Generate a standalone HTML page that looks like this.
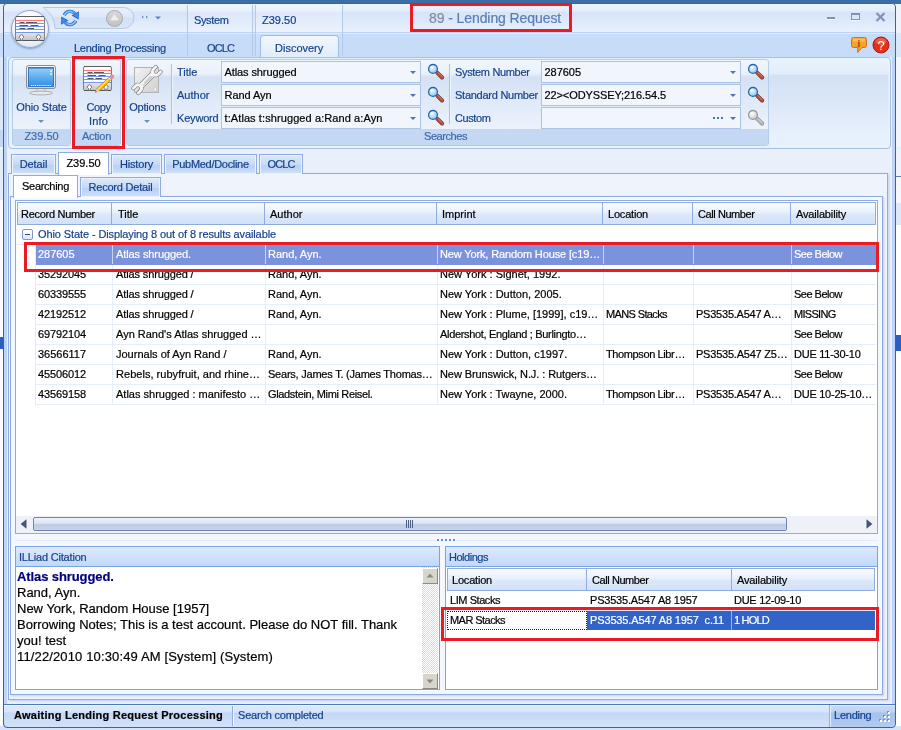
<!DOCTYPE html>
<html>
<head>
<meta charset="utf-8">
<title>89 - Lending Request</title>
<style>
*{box-sizing:border-box;margin:0;padding:0}
html,body{width:901px;height:730px;overflow:hidden;background:#fff}
body{-webkit-text-stroke:.2px;will-change:transform;position:relative;font-family:"Liberation Sans",sans-serif;font-size:11px;color:#000;line-height:13px}
.a{position:absolute}
.t{position:absolute;white-space:nowrap;line-height:13px;height:13px}
.b{color:#15428b}
.c{text-align:center}
/* window */
#topstrip{left:0;top:0;width:901px;height:4px;background:#3b6ea5}
#leftbg{left:0;top:4px;width:4px;height:726px;background:linear-gradient(#e4ecf9 0,#e4ecf9 29px,#c7dcf9 29px,#c7dcf9 53px,#dce7f7 53px,#dce7f7 126px,#c3d7f2 126px,#c3d7f2 143px,#e8fbff 143px,#e8fbff 145px,#e3ecfa 145px,#e3ecfa 196px,#fafcfe 196px,#fafcfe 333px,#2a5fc4 333px,#2a5fc4 345px,#fafcfe 345px)}
#rightbg{left:895px;top:4px;width:6px;height:726px;background:linear-gradient(#eef3fb 0,#eef3fb 29px,#d9e7fa 29px,#d9e7fa 53px,#f1f5fc 53px,#f1f5fc 143px,#d8f4ff 143px,#d8f4ff 145px,#eef3fb 145px,#eef3fb 172px,#5f7fb5 172px,#5f7fb5 173px,#f4f7fd 173px,#f4f7fd 199px,#dde8f8 199px,#dde8f8 221px,#fdfeff 221px,#fdfeff 331px,#2a5fc4 331px,#2a5fc4 347px,#fdfeff 347px)}
#botbg{left:0;top:726px;width:901px;height:4px;background:#d6e3f7}
#win{left:3px;top:3px;width:893px;height:725px;border:1px solid #3d62a0;border-radius:4px;background:#e9f0fb;overflow:hidden;box-shadow:inset 3px 0 0 #bdd3f7,inset -3px 0 0 #bdd3f7}
#titlebar{left:4px;top:4px;width:891px;border-radius:4px 4px 0 0;height:29px;background:linear-gradient(#ecf3fd 0,#e4edfb 7px,#d7e4f8 8px,#dae6f9 14px,#e9f1fd 28px,#b9d2f5 28px)}
#tabrow{left:4px;top:33px;width:891px;height:24px;background:#c7dcf9;border-top:1px solid #dcebfd}
/* ribbon */
#ribbon{left:8px;top:57px;width:883px;height:92px;border:1px solid #a9c0e4;border-radius:4px;box-shadow:inset 0 0 0 1px #e0f5ff,inset 0 0 0 2px rgba(226,246,255,.6);background:linear-gradient(#ebf2fc 0,#e3ecfa 16px,#d3e1f5 17px,#dce7f8 45px,#e8f0fc 78px,#e9f1fc 91px)}
.grp{position:absolute;top:1px;height:87px;border:1px solid #b4cde9;border-radius:3px;background:linear-gradient(rgba(255,255,255,.35) 0,rgba(255,255,255,.25) 16px,rgba(255,255,255,0) 17px,rgba(255,255,255,.25) 71px)}
.grp .cap{position:absolute;left:0;right:0;bottom:0;height:16px;background:#c5d8f3;color:#3e6aaa;text-align:center;line-height:15px;border-radius:0 0 2px 2px}
.combo{position:absolute;height:22px;width:200px;border:1px solid #abc4e6;background:#f1f6fc}
.combo span{position:absolute;left:2.5px;top:4px;line-height:13px;white-space:nowrap}
.combo i{position:absolute;right:4px;top:9px;width:0;height:0;border:3px solid transparent;border-top:3px solid #4a74b4;border-bottom:0}
.vsep{position:absolute;width:1px;background:#a9c2e2;box-shadow:1px 0 0 #eef4fc}
/* tabs */
.tab{position:absolute;height:20px;border:1px solid #8eace0;border-bottom:0;background:linear-gradient(#dfeafa 0,#c6d9f5 50%,#b7cff3 51%,#cfe0f8 100%);box-shadow:inset 0 0 0 1px #eaf2fd;color:#15428b;text-align:center;line-height:18px}
.tab.on{background:#fff;color:#000;box-shadow:none}
.page{position:absolute;border:1px solid #8eace0}
/* grid */
.hdr{position:absolute;height:23px;border-top:1px solid #8eace0;border-right:1px solid #8eace0;border-bottom:1px solid #8eace0;background:linear-gradient(#f8fbff 0,#e9f0fb 45%,#dbe7f9 55%,#d3e2f8 100%);line-height:22px;padding-left:5px;white-space:nowrap;overflow:hidden}
.row{position:absolute;left:36px;width:840px;height:20px;border-bottom:1px solid #e6eefa}
.row span{position:absolute;top:0;height:19px;line-height:18px;padding-left:2px;white-space:nowrap;overflow:hidden;border-left:1px solid #e6eefa}
.row.sel{background:#7b93dc;color:#fff;border-bottom-color:#7b93dc}
.row.sel span{border-left-color:#c9d4f3}
.red{position:absolute;border:3px solid #ea1b24}
.gb{position:absolute;border:1px solid #79a3e1;background:#fff}
.gb .gh{position:absolute;left:0;top:0;right:0;height:20px;border-bottom:1px solid #79a3e1;background:linear-gradient(#deeafd 0,#cfe1fb 50%,#c2d8f9 100%);color:#15428b;line-height:20px;padding-left:3px}
</style>
</head>
<body>
<div class="a" id="topstrip"></div>
<div class="a" id="leftbg"></div>
<div class="a" id="rightbg"></div>
<div class="a" id="botbg"></div>

<div class="a" id="win"></div>
<div class="a" id="titlebar"></div>
<div class="a" id="tabrow"></div>
<!-- quick access toolbar pill -->
<svg class="a" style="left:38px;top:5px" width="100" height="26" viewBox="38 5 100 26">
 <defs><linearGradient id="qat" x1="0" y1="0" x2="0" y2="1"><stop offset="0" stop-color="#e9f0fb"/><stop offset=".45" stop-color="#dde8f8"/><stop offset=".5" stop-color="#d2e0f5"/><stop offset="1" stop-color="#dae6f8"/></linearGradient></defs>
 <path d="M43 8.500H123.500A10.500 10.500 0 0 1 123.500 29.500H56A25 25 0 0 0 43 8.500Z" fill="#f3f8ff"/>
 <path d="M43 7.500H123.500A10.500 10.500 0 0 1 123.500 28.500H55A25 25 0 0 0 43 7.500Z" fill="url(#qat)" stroke="#b4c9e8"/>
</svg>
<!-- app button -->
<div class="a" style="left:11px;top:10px;width:38px;height:38px;border-radius:19px;border:1px solid #8fa6c8;background:radial-gradient(circle at 50% 35%,#ffffff 0,#f3f7fc 55%,#c9d8ec 100%);box-shadow:0 1px 2px rgba(60,90,140,.5)"></div>
<svg class="a" style="left:15px;top:15px" width="30" height="27" viewBox="0 0 30 27">
 <defs><linearGradient id="cg29" x1="0" y1="0" x2="0" y2="1"><stop offset="0" stop-color="#e6e6e6"/><stop offset="1" stop-color="#c4c4c4"/></linearGradient></defs>
 <rect x=".5" y="1.500" width="29" height="24" rx="1.500" fill="#fffdfb" stroke="#808080"/>
 <path d="M1 1.500h28" stroke="#5e5e5e"/>
 <rect x="1" y="18" width="28" height="7" fill="url(#cg29)"/>
 <path d="M1 5.500h28" stroke="#f77"/>
 <path d="M1 8.500h28M1 11.500h28M1 14.500h28M1 17.500h28" stroke="#6f9cf0"/>
 <path d="M4.500 7.500h5M11 7.500h11M4.500 10.500h8.500M15.500 10.500h8M4.500 13.500h6M12.500 13.500h6.500" stroke="#5a5a5a" stroke-width="1.100"/>
 <path d="M1 25.5h28" stroke="#555"/>
 <path d="M5.7 25.5v-1.800a2 2 0 1 1 1.600 0v1.800z" fill="#fff" stroke="#666" stroke-width=".9"/><path d="M22.7 25.5v-1.800a2 2 0 1 1 1.600 0v1.800z" fill="#fff" stroke="#666" stroke-width=".9"/>
</svg>
<!-- refresh icon -->
<svg class="a" style="left:60px;top:8px" width="20" height="20" viewBox="60 8 20 20">
 <g fill="none" stroke="#1f62d0" stroke-width="3.400" stroke-linecap="butt"><path d="M64.300 15.100A6.400 6.400 0 0 1 74.800 13.400"/><path d="M75.700 20.900A6.400 6.400 0 0 1 65.200 22.600"/></g>
 <path d="M71.600 15.600L78.900 11.200 78.700 19.400z" fill="#1f62d0"/><path d="M68.400 20.400L61.100 24.800 61.300 16.600z" fill="#1f62d0"/>
 <g fill="none" stroke="#4f9ff5" stroke-width="2.200"><path d="M64.300 15.100A6.400 6.400 0 0 1 74.800 13.400"/><path d="M75.700 20.900A6.400 6.400 0 0 1 65.200 22.600"/></g>
 <path d="M73.200 15.400L78.100 12.500 78 18z" fill="#3d8df0"/><path d="M66.800 20.600L61.900 23.500 62 18z" fill="#3d8df0"/>
 <g fill="none" stroke="#a8d2fb" stroke-width=".9"><path d="M64.400 15.200A5.600 5.600 0 0 1 72.500 12.300"/><path d="M75.600 20.800A5.600 5.600 0 0 1 67.500 23.700"/></g>
</svg>
<!-- disabled up button -->
<div class="a" style="left:106px;top:10px;width:17px;height:17px;border-radius:9px;border:1px solid #a9a9a9;background:linear-gradient(#d9d9d9,#c2c2c2)"></div>
<svg class="a" style="left:110px;top:14px" width="9" height="7" viewBox="0 0 9 7"><path d="M4.500 .8L8.300 6H.7z" fill="#ededed" stroke="#f8f8f8" stroke-width=".6"/></svg>
<!-- qat customize -->
<svg class="a" style="left:141px;top:14px" width="22" height="8" viewBox="0 0 22 8"><path d="M1 1.500l2 1.500-2 1.500zM5 1.500l2 1.500-2 1.500z" fill="#6f93c8"/><path d="M14 2.500h6l-3 3z" fill="#5f86c0"/></svg>
<!-- context categories -->
<div class="a" style="left:187px;top:5px;width:66px;height:51px;border-left:1px solid #b3c9e8;border-right:1px solid #b3c9e8;background:linear-gradient(rgba(255,255,255,.25),rgba(255,255,255,0) 60%)"></div>
<div class="a" style="left:255px;top:5px;width:88px;height:51px;border-left:1px solid #b3c9e8;border-right:1px solid #b3c9e8;background:linear-gradient(rgba(255,255,255,.25),rgba(255,255,255,0))"></div>
<div class="t b" style="letter-spacing:-0.365px;left:194px;top:14px">System</div>
<div class="t b" style="left:262px;top:14px">Z39.50</div>
<!-- window title -->
<div class="t" style="left:429px;top:10px;font-size:14px;line-height:16px;height:16px;color:#5a7db5;letter-spacing:-.09px"><span style="color:#7f8c9d">89</span> - Lending Request</div>
<!-- window buttons -->
<div class="a" style="left:827px;top:17px;width:8px;height:2px;background:#7d92b5;box-shadow:0 1px 0 #f4f8fe"></div>
<div class="a" style="left:851px;top:13px;width:9px;height:7px;border:1px solid #7d92b5;border-top-width:2px;box-shadow:0 1px 0 #f4f8fe"></div>
<svg class="a" style="left:875px;top:12px" width="11" height="10" viewBox="0 0 11 10"><path d="M1.500 1l8 8M9.500 1l-8 8" stroke="#7d92b5" stroke-width="2.200"/></svg>
<!-- ribbon tab labels -->
<div class="t b" style="left:74px;top:42px;letter-spacing:-.26px">Lending Processing</div>
<div class="t b" style="letter-spacing:-0.891px;left:207px;top:42px">OCLC</div>
<div class="a" style="left:260px;top:35px;width:79px;height:23px;border:1px solid #9ebde6;border-bottom:0;border-radius:4px 4px 0 0;background:linear-gradient(#f2f7fe,#e1ebfa)"></div>
<div class="t b" style="left:275px;top:42px">Discovery</div>
<!-- help icons -->
<svg class="a" style="left:850px;top:36px" width="18" height="18" viewBox="0 0 18 18">
 <path d="M3.500 1.500h11a2 2 0 0 1 2 2v6a2 2 0 0 1-2 2h-2.500l-4.300 5v-5H3.500a2 2 0 0 1-2-2v-6a2 2 0 0 1 2-2z" fill="#f7a325" stroke="#d0701a"/>
 <path d="M3 2.500h12v3H3z" fill="#fbc766" opacity=".7"/>
 <text x="9" y="10.500" font-family="Liberation Serif,serif" font-weight="bold" font-size="10" text-anchor="middle" fill="#b23a1a">i</text>
</svg>
<svg class="a" style="left:872px;top:36px" width="18" height="18" viewBox="0 0 18 18">
 <circle cx="9" cy="9" r="8" fill="#e0301e" stroke="#a51b10"/>
 <ellipse cx="9" cy="5.500" rx="5.500" ry="3.500" fill="#f47b62" opacity=".6"/>
 <text x="9" y="13.500" font-family="Liberation Sans,sans-serif" font-size="13" text-anchor="middle" fill="#fff">?</text>
</svg>
<div class="a" id="ribbon"></div>
<!-- groups -->
<div class="grp" style="left:12px;top:59px;width:59px"><div class="cap">Z39.50</div></div>
<div class="grp" style="left:74px;top:59px;width:47px"><div class="cap" style="letter-spacing:-0.23px;padding-right:2px">Action</div></div>
<div class="grp" style="left:126px;top:59px;width:643px"><div class="cap" style="letter-spacing:-0.436px;padding-right:4px">Searches</div></div>
<!-- Ohio State button -->
<svg class="a" style="left:25px;top:64px" width="32" height="32" viewBox="0 0 32 32">
 <defs><linearGradient id="scr" x1="0" y1="0" x2="0" y2="1"><stop offset="0" stop-color="#9ad0f8"/><stop offset=".5" stop-color="#62aef0"/><stop offset="1" stop-color="#2f8fe6"/></linearGradient>
 <linearGradient id="bez" x1="0" y1="0" x2="0" y2="1"><stop offset="0" stop-color="#fafafa"/><stop offset="1" stop-color="#d4d6da"/></linearGradient></defs>
 <path d="M12.500 24.500h7l1 3.500h-9z" fill="#e4e6ea" stroke="#a0a4aa" stroke-width=".7"/>
 <ellipse cx="16" cy="29" rx="11.500" ry="1.900" fill="#e8eaed" stroke="#9a9ea6" stroke-width=".8"/>
 <rect x="1.500" y="1.500" width="29" height="23" rx="2" fill="url(#bez)" stroke="#8a8d92"/>
 <rect x="3.500" y="3.500" width="25" height="19" fill="url(#scr)" stroke="#2a72b8" stroke-width=".9"/>
 <path d="M4 4.300h24" stroke="#2a72b8" stroke-width=".7"/>
 <path d="M6 21.500h20" stroke="#e8f4ff" stroke-width="1.200" stroke-dasharray="1.200 .7"/>
 <rect x="25" y="6.500" width="2" height="1.200" fill="#fff"/><rect x="25" y="9.500" width="2" height="1.200" fill="#fff"/>
</svg>
<div class="t b c" style="letter-spacing:-0.148px;left:12px;top:101px;width:59px">Ohio State</div>
<i class="a" style="left:38px;top:120px;border:3px solid transparent;border-top:3px solid #6a8fca;border-bottom:0"></i>
<!-- Copy Info button -->
<svg class="a" style="left:83px;top:64px" width="32" height="31" viewBox="0 0 32 31">
 <g transform="translate(0,1)">
 <defs><linearGradient id="cgb" x1="0" y1="0" x2="0" y2="1"><stop offset="0" stop-color="#e6e6e6"/><stop offset="1" stop-color="#c4c4c4"/></linearGradient></defs>
 <rect x=".5" y="1.500" width="28" height="24" rx="1.500" fill="#fffdfb" stroke="#808080"/>
 <path d="M1 1.500h27" stroke="#5e5e5e"/>
 <rect x="1" y="18" width="27" height="7" fill="url(#cgb)"/>
 <path d="M1 5.500h27" stroke="#f77"/>
 <path d="M1 8.500h27M1 11.500h27M1 14.500h27M1 17.500h27" stroke="#6f9cf0"/>
 <path d="M4.500 7.500h5M11 7.500h10M4.500 10.500h8.500M15.500 10.500h7M4.500 13.500h6M12.500 13.500h6.500" stroke="#5a5a5a" stroke-width="1.100"/>
 <path d="M1 25.5h27" stroke="#555"/>
 <path d="M5.7 25.5v-1.800a2 2 0 1 1 1.600 0v1.800z" fill="#fff" stroke="#666" stroke-width=".9"/><path d="M22.2 25.5v-1.800a2 2 0 1 1 1.600 0v1.800z" fill="#fff" stroke="#666" stroke-width=".9"/>
 </g>
 <path d="M14.020 24.510L24.870 14.160 27.220 16.620 16.370 26.970z" fill="#ffc60a" stroke="#c66a00" stroke-width=".7" stroke-linejoin="round"/>
 <path d="M15 25.300L25.700 15.100" stroke="#fff0a0" stroke-width=".9"/>
 <path d="M24.870 14.160L26.320 12.780 28.670 15.240 27.220 16.620z" fill="#ececec" stroke="#8c8c8c" stroke-width=".5"/>
 <path d="M26.320 12.780L28.490 10.710Q30.900 10.600 30.840 13.170L28.670 15.240z" fill="#f29292" stroke="#c06060" stroke-width=".5"/>
 <path d="M14.020 24.510L16.370 26.970 12.300 28.500z" fill="#f8dfc0" stroke="#c89860" stroke-width=".4"/>
 <path d="M12.860 27.200L13.620 28 12.300 28.500z" fill="#111"/>
</svg>
<div class="t b c" style="letter-spacing:-0.422px;left:74px;top:101px;width:49px">Copy</div>
<div class="t b c" style="letter-spacing:0.16px;left:74px;top:115px;width:49px">Info</div>
<!-- Options button -->
<svg class="a" style="left:130px;top:62px" width="34" height="36" viewBox="130 62 34 36">
 <defs><linearGradient id="plt" x1="0" y1="0" x2="1" y2="1"><stop offset="0" stop-color="#f2f2f2"/><stop offset="1" stop-color="#cfcfcf"/></linearGradient></defs>
 <rect x="134.500" y="67.500" width="24" height="25" fill="url(#plt)" stroke="#b2b2b2"/>
 <rect x="137" y="70" width="1.500" height="1.500" fill="#fff"/><rect x="154.500" y="88.500" width="1.500" height="1.500" fill="#fff"/>
 <g fill="none" stroke-linecap="round" stroke-linejoin="round">
  <path d="M140.500 86.500L153.500 73.500" stroke="#8a8a8a" stroke-width="6.400" stroke-linecap="butt"/>
  <path d="M155.870 66.920L153.400 69.400A3.400 3.400 0 0 0 158.200 74.200L160.680 71.730" stroke="#8a8a8a" stroke-width="4.200"/>
  <path d="M138.130 93.080L140.600 90.600A3.400 3.400 0 0 0 135.800 85.800L133.320 88.270" stroke="#8a8a8a" stroke-width="4.200"/>
  <path d="M140.500 86.500L153.500 73.500" stroke="#f4f4f4" stroke-width="4.800" stroke-linecap="butt"/>
  <path d="M155.870 66.920L153.400 69.400A3.400 3.400 0 0 0 158.200 74.200L160.680 71.730" stroke="#f4f4f4" stroke-width="2.700"/>
  <path d="M138.130 93.080L140.600 90.600A3.400 3.400 0 0 0 135.800 85.800L133.320 88.270" stroke="#f4f4f4" stroke-width="2.700"/>
  <path d="M143.500 84.500L151.500 76.500" stroke="#c9c9c9" stroke-width="2.200"/>
 </g>
 <circle cx="151.500" cy="75.500" r=".8" fill="#fff"/><circle cx="143.500" cy="83.500" r=".8" fill="#fff"/>
</svg>
<div class="t b c" style="letter-spacing:-0.203px;left:126px;top:101px;width:43px">Options</div>
<i class="a" style="left:144px;top:120px;border:3px solid transparent;border-top:3px solid #6a8fca;border-bottom:0"></i>
<div class="vsep" style="left:171px;top:64px;height:60px"></div>
<div class="vsep" style="left:449px;top:64px;height:60px"></div>
<!-- left search column -->
<div class="t b" style="left:177px;top:66px">Title</div>
<div class="t b" style="left:177px;top:89px">Author</div>
<div class="t b" style="letter-spacing:-0.185px;left:177px;top:112px">Keyword</div>
<div class="combo" style="left:221px;top:61px"><span style="letter-spacing:-0.099px">Atlas shrugged</span><i></i></div>
<div class="combo" style="left:221px;top:84px"><span style="letter-spacing:-0.064px">Rand Ayn</span><i></i></div>
<div class="combo" style="left:221px;top:107px"><span style="letter-spacing:0.093px">t:Atlas t:shrugged a:Rand a:Ayn</span><i></i></div>
<!-- right search column -->
<div class="t b" style="letter-spacing:-0.335px;left:455px;top:66px">System Number</div>
<div class="t b" style="letter-spacing:-0.255px;left:455px;top:89px">Standard Number</div>
<div class="t b" style="letter-spacing:-0.401px;left:455px;top:112px">Custom</div>
<div class="combo" style="left:541px;top:61px"><span style="letter-spacing:-0.036px">287605</span><i></i></div>
<div class="combo" style="left:541px;top:84px"><span style="letter-spacing:-0.097px">22&gt;&lt;ODYSSEY;216.54.5</span><i></i></div>
<div class="combo" style="left:541px;top:107px"><i></i><b style="position:absolute;right:17px;top:9px;width:10px;height:2px;background:repeating-linear-gradient(90deg,#4a74b4 0,#4a74b4 2px,transparent 2px,transparent 4px)"></b></div>
<!-- magnifiers -->
<svg width="0" height="0" style="position:absolute"><defs>
 <radialGradient id="lens" cx=".35" cy=".3" r=".8"><stop offset="0" stop-color="#ffffff"/><stop offset=".35" stop-color="#cfe6fb"/><stop offset="1" stop-color="#8cc0f2"/></radialGradient>
 <radialGradient id="lensg" cx=".35" cy=".3" r=".8"><stop offset="0" stop-color="#ffffff"/><stop offset=".4" stop-color="#e9e9e9"/><stop offset="1" stop-color="#c4c4c4"/></radialGradient>
</defs></svg>
<svg class="a" style="left:427px;top:62px" width="19" height="19" viewBox="0 0 19 19"><path d="M10.400 10.900l4.700 4.600" stroke="#7c3428" stroke-width="4" stroke-linecap="round"/><path d="M10.400 10.900l4.700 4.600" stroke="#a85040" stroke-width="2.800" stroke-linecap="round"/><path d="M11 10.600l4.200 4.100" stroke="#d8907f" stroke-width=".9" stroke-linecap="round"/><circle cx="6" cy="6.900" r="4.400" fill="url(#lens)" stroke="#2364b0" stroke-width="1.300"/></svg>
<svg class="a" style="left:427px;top:85px" width="19" height="19" viewBox="0 0 19 19"><path d="M10.400 10.900l4.700 4.600" stroke="#7c3428" stroke-width="4" stroke-linecap="round"/><path d="M10.400 10.900l4.700 4.600" stroke="#a85040" stroke-width="2.800" stroke-linecap="round"/><path d="M11 10.600l4.200 4.100" stroke="#d8907f" stroke-width=".9" stroke-linecap="round"/><circle cx="6" cy="6.900" r="4.400" fill="url(#lens)" stroke="#2364b0" stroke-width="1.300"/></svg>
<svg class="a" style="left:427px;top:108px" width="19" height="19" viewBox="0 0 19 19"><path d="M10.400 10.900l4.700 4.600" stroke="#7c3428" stroke-width="4" stroke-linecap="round"/><path d="M10.400 10.900l4.700 4.600" stroke="#a85040" stroke-width="2.800" stroke-linecap="round"/><path d="M11 10.600l4.200 4.100" stroke="#d8907f" stroke-width=".9" stroke-linecap="round"/><circle cx="6" cy="6.900" r="4.400" fill="url(#lens)" stroke="#2364b0" stroke-width="1.300"/></svg>
<svg class="a" style="left:747px;top:62px" width="19" height="19" viewBox="0 0 19 19"><path d="M10.400 10.900l4.700 4.600" stroke="#7c3428" stroke-width="4" stroke-linecap="round"/><path d="M10.400 10.900l4.700 4.600" stroke="#a85040" stroke-width="2.800" stroke-linecap="round"/><path d="M11 10.600l4.200 4.100" stroke="#d8907f" stroke-width=".9" stroke-linecap="round"/><circle cx="6" cy="6.900" r="4.400" fill="url(#lens)" stroke="#2364b0" stroke-width="1.300"/></svg>
<svg class="a" style="left:747px;top:85px" width="19" height="19" viewBox="0 0 19 19"><path d="M10.400 10.900l4.700 4.600" stroke="#7c3428" stroke-width="4" stroke-linecap="round"/><path d="M10.400 10.900l4.700 4.600" stroke="#a85040" stroke-width="2.800" stroke-linecap="round"/><path d="M11 10.600l4.200 4.100" stroke="#d8907f" stroke-width=".9" stroke-linecap="round"/><circle cx="6" cy="6.900" r="4.400" fill="url(#lens)" stroke="#2364b0" stroke-width="1.300"/></svg>
<svg class="a" style="left:747px;top:108px" width="19" height="19" viewBox="0 0 19 19"><path d="M10.400 10.900l4.700 4.600" stroke="#8e8e8e" stroke-width="4" stroke-linecap="round"/><path d="M10.400 10.900l4.700 4.600" stroke="#b4b4b4" stroke-width="2.800" stroke-linecap="round"/><path d="M11 10.600l4.200 4.100" stroke="#dedede" stroke-width=".9" stroke-linecap="round"/><circle cx="6" cy="6.900" r="4.400" fill="url(#lensg)" stroke="#9a9a9a" stroke-width="1.300"/></svg>

<!-- outer tab control -->
<div class="page" style="left:8px;top:173px;width:880px;height:527px;box-shadow:1px 1px 2px rgba(120,150,200,.35);background:#eef3fc"></div>
<div class="tab" style="letter-spacing:-0.104px;left:11px;top:154px;width:45px">Detail</div>
<div class="tab" style="letter-spacing:-0.176px;left:111px;top:154px;width:51px">History</div>
<div class="tab" style="letter-spacing:-0.301px;left:164px;top:154px;width:93px">PubMed/Docline</div>
<div class="tab" style="letter-spacing:-0.891px;left:259px;top:154px;width:44px">OCLC</div>
<div class="tab on" style="left:58px;top:152px;width:51px;height:23px;line-height:20px">Z39.50</div>
<!-- inner tab control -->
<div class="page" style="left:10px;top:196px;width:873px;height:499px;box-shadow:1px 1px 2px rgba(120,150,200,.35);background:#f4f8fe"></div>
<div class="tab" style="letter-spacing:-0.203px;left:80px;top:177px;width:81px">Record Detail</div>
<div class="tab on" style="letter-spacing:-0.283px;left:13px;top:175px;width:65px;height:23px;line-height:20px">Searching</div>
<!-- result grid -->
<div class="a" style="left:15px;top:200px;width:863px;height:334px;border:1px solid #8eace0;background:#fff"></div>
<div class="hdr" style="letter-spacing:-0.28px;left:17px;top:202px;width:95px;padding-left:3px;border-left:1px solid #8eace0">Record Number</div>
<div class="hdr" style="left:112px;top:202px;width:153px;padding-left:6px">Title</div>
<div class="hdr" style="left:265px;top:202px;width:172px">Author</div>
<div class="hdr" style="left:437px;top:202px;width:166px">Imprint</div>
<div class="hdr" style="letter-spacing:-0.199px;left:603px;top:202px;width:90px">Location</div>
<div class="hdr" style="letter-spacing:-0.422px;left:693px;top:202px;width:98px">Call Number</div>
<div class="hdr" style="letter-spacing:-0.148px;left:791px;top:202px;width:85px">Availability</div>
<!-- group row -->
<div class="a" style="left:17px;top:225px;width:859px;height:20px;border-bottom:1px solid #e3ecf9"></div>
<div class="a" style="left:22px;top:229px;width:11px;height:11px;border:1px solid #7f9bc8;border-radius:2px;background:linear-gradient(#fff,#dfe8f6)"></div>
<div class="a" style="left:25px;top:234px;width:5px;height:1px;background:#334f7f"></div>
<div class="t b" style="letter-spacing:-0.103px;left:38px;top:228px">Ohio State - Displaying 8 out of 8 results available</div>
<!-- rows -->
<div class="a" style="left:17px;top:245px;width:19px;height:160px;border-right:1px solid #e3ecf9"></div>
<div class="row sel" style="top:245px"><span style="letter-spacing:-0.036px;left:0;width:76px;border-left:0">287605</span><span style="letter-spacing:-0.096px;left:76px;width:153px;padding-left:3px">Atlas shrugged.</span><span style="left:229px;width:172px">Rand, Ayn.</span><span style="letter-spacing:-0.138px;left:401px;width:166px">New York, Random House [c19…</span><span style="left:567px;width:90px"></span><span style="left:657px;width:98px"></span><span style="letter-spacing:-0.51px;left:755px;width:85px">See Below</span></div>
<div class="row" style="top:265px"><span style="letter-spacing:-0.119px;left:0;width:76px;border-left:0">35292045</span><span style="letter-spacing:-0.125px;left:76px;width:153px;padding-left:3px">Atlas shrugged /</span><span style="left:229px;width:172px">Rand, Ayn.</span><span style="left:401px;width:166px">New York : Signet, 1992.</span><span style="left:567px;width:90px"></span><span style="left:657px;width:98px"></span><span style="left:755px;width:85px"></span></div>
<div class="row" style="top:285px"><span style="letter-spacing:-0.119px;left:0;width:76px;border-left:0">60339555</span><span style="letter-spacing:-0.125px;left:76px;width:153px;padding-left:3px">Atlas shrugged /</span><span style="left:229px;width:172px">Rand, Ayn.</span><span style="left:401px;width:166px">New York : Dutton, 2005.</span><span style="left:567px;width:90px"></span><span style="left:657px;width:98px"></span><span style="letter-spacing:-0.51px;left:755px;width:85px">See Below</span></div>
<div class="row" style="top:305px"><span style="letter-spacing:-0.119px;left:0;width:76px;border-left:0">42192512</span><span style="letter-spacing:-0.125px;left:76px;width:153px;padding-left:3px">Atlas shrugged /</span><span style="left:229px;width:172px">Rand, Ayn.</span><span style="left:401px;width:166px">New York : Plume, [1999], c19…</span><span style="letter-spacing:-0.624px;left:567px;width:90px">MANS Stacks</span><span style="letter-spacing:-0.228px;left:657px;width:98px">PS3535.A547 A…</span><span style="letter-spacing:-0.708px;left:755px;width:85px">MISSING</span></div>
<div class="row" style="top:325px"><span style="letter-spacing:-0.119px;left:0;width:76px;border-left:0">69792104</span><span style="left:76px;width:153px;padding-left:3px">Ayn Rand's Atlas shrugged …</span><span style="left:229px;width:172px"></span><span style="letter-spacing:-0.324px;left:401px;width:166px">Aldershot, England ; Burlingto…</span><span style="left:567px;width:90px"></span><span style="left:657px;width:98px"></span><span style="letter-spacing:-0.51px;left:755px;width:85px">See Below</span></div>
<div class="row" style="top:345px"><span style="letter-spacing:-0.016px;left:0;width:76px;border-left:0">36566117</span><span style="left:76px;width:153px;padding-left:3px">Journals of Ayn Rand /</span><span style="left:229px;width:172px">Rand, Ayn.</span><span style="left:401px;width:166px">New York : Dutton, c1997.</span><span style="letter-spacing:-0.384px;left:567px;width:90px">Thompson Libr…</span><span style="letter-spacing:-0.22px;left:657px;width:98px">PS3535.A547 Z5…</span><span style="letter-spacing:-0.25px;left:755px;width:85px">DUE 11-30-10</span></div>
<div class="row" style="top:365px"><span style="letter-spacing:-0.119px;left:0;width:76px;border-left:0">45506012</span><span style="letter-spacing:0.032px;left:76px;width:153px;padding-left:3px">Rebels, rubyfruit, and rhine…</span><span style="letter-spacing:-0.229px;left:229px;width:172px">Sears, James T. (James Thomas…</span><span style="letter-spacing:-0.085px;left:401px;width:166px">New Brunswick, N.J. : Rutgers…</span><span style="left:567px;width:90px"></span><span style="left:657px;width:98px"></span><span style="letter-spacing:-0.51px;left:755px;width:85px">See Below</span></div>
<div class="row" style="top:385px"><span style="letter-spacing:-0.119px;left:0;width:76px;border-left:0">43569158</span><span style="left:76px;width:153px;padding-left:3px">Atlas shrugged : manifesto …</span><span style="letter-spacing:-0.347px;left:229px;width:172px">Gladstein, Mimi Reisel.</span><span style="left:401px;width:166px">New York : Twayne, 2000.</span><span style="letter-spacing:-0.384px;left:567px;width:90px">Thompson Libr…</span><span style="letter-spacing:-0.228px;left:657px;width:98px">PS3535.A547 A…</span><span style="letter-spacing:-0.256px;left:755px;width:85px">DUE 10-25-10…</span></div>
<!-- horizontal scrollbar -->
<div class="a" style="left:16px;top:516px;width:861px;height:17px;background:#eef1f8"></div>
<svg class="a" style="left:20px;top:519px" width="7" height="10" viewBox="0 0 7 10"><path d="M6.500 .3v9.400L.6 5z" fill="#44557a"/></svg>
<svg class="a" style="left:866px;top:519px" width="7" height="10" viewBox="0 0 7 10"><path d="M.5 .3v9.400L6.400 5z" fill="#44557a"/></svg>
<div class="a" style="left:33px;top:517px;width:754px;height:14px;border:1px solid #6f85b3;border-radius:2px;background:linear-gradient(#eef3fb 0,#d9e3f3 45%,#bccbe4 55%,#c9d6ea 100%)"></div>
<div class="a" style="left:406px;top:520px;width:8px;height:8px;background:repeating-linear-gradient(90deg,#4d5f82 0,#4d5f82 1px,transparent 1px,transparent 2px)"></div>
<!-- splitter -->
<div class="a" style="left:15px;top:540px;width:863px;height:2px;background:linear-gradient(#d6e4f9,#fff)"></div>
<div class="a" style="left:436px;top:538px;width:20px;height:4px;background:#f4f8fe"></div>
<div class="a" style="left:437px;top:539px;width:19px;height:2px;background:repeating-linear-gradient(90deg,#5f90e0 0,#5f90e0 2px,transparent 2px,transparent 4px)"></div>
<!-- ILLiad Citation -->
<div class="gb" style="left:15px;top:546px;width:425px;height:144px"><div class="gh" style="letter-spacing:-0.189px">ILLiad Citation</div></div>
<div class="a" style="left:17px;top:569px;width:422px;height:119px;font-size:13px;line-height:16px;color:#000">
 <div class="a" style="left:0;top:0;width:406px"><b style="letter-spacing:-0.096px;color:#000080">Atlas shrugged.</b><br>Rand, Ayn.<br>New York, Random House [1957]<br>Borrowing Notes; This is a test account. Please do NOT fill. Thank you! test<br><span style="letter-spacing:0.138px">11/22/2010 10:30:49 AM [System] (System)</span></div>
</div>
<!-- citation vertical scrollbar -->
<div class="a" style="left:422px;top:567px;width:16px;height:122px;background:#f1efe8;background-image:repeating-conic-gradient(#fff 0 25%,#dcdad2 0 50%);background-size:2px 2px"></div>
<div class="a" style="left:422px;top:568px;width:16px;height:16px;border:1px solid #fff;border-right-color:#8c8a80;border-bottom-color:#8c8a80;background:#d8d5cb"></div>
<div class="a" style="left:422px;top:673px;width:16px;height:16px;border:1px solid #fff;border-right-color:#8c8a80;border-bottom-color:#8c8a80;background:#d8d5cb"></div>
<svg class="a" style="left:426px;top:573px" width="8" height="5" viewBox="0 0 8 5"><path d="M4 .5L7.500 4.500H.5z" fill="#8a8a8a"/></svg>
<svg class="a" style="left:426px;top:679px" width="8" height="5" viewBox="0 0 8 5"><path d="M4 4.500L7.500 .5H.5z" fill="#8a8a8a"/></svg>
<!-- Holdings -->
<div class="gb" style="left:445px;top:546px;width:433px;height:144px"><div class="gh" style="letter-spacing:-0.477px">Holdings</div></div>

<div class="hdr" style="letter-spacing:-0.199px;left:447px;top:568px;width:140px;padding-left:4px;border-left:1px solid #8eace0">Location</div>
<div class="hdr" style="letter-spacing:-0.422px;left:587px;top:568px;width:145px">Call Number</div>
<div class="hdr" style="letter-spacing:-0.148px;left:732px;top:568px;width:143px">Availability</div>
<div class="t" style="letter-spacing:-0.441px;left:450px;top:594px">LIM Stacks</div>
<div class="t" style="letter-spacing:-0.201px;left:590px;top:594px">PS3535.A547 A8 1957</div>
<div class="t" style="letter-spacing:-0.277px;left:734px;top:594px">DUE 12-09-10</div>
<div class="a" style="left:448px;top:610px;width:427px;height:1px;background:#e3ecf9"></div>
<div class="a" style="left:587px;top:611px;width:288px;height:19px;background:#3163c8"></div>
<div class="a" style="left:731px;top:611px;width:1px;height:19px;background:#9db6ea"></div>
<div class="a" style="left:447px;top:611px;width:140px;height:19px;border:1px dotted #222"></div>
<div class="t" style="letter-spacing:-0.552px;left:450px;top:614px">MAR Stacks</div>
<div class="t" style="letter-spacing:-0.137px;left:590px;top:614px;color:#fff">PS3535.A547 A8 1957&nbsp; c.11</div>
<div class="t" style="letter-spacing:-0.792px;left:734px;top:614px;color:#fff">1 HOLD</div>
<!-- status bar -->
<div class="a" style="left:4px;top:704px;width:891px;height:23px;border-top:1px solid #4a78bd;border-radius:0 0 6px 6px;background:linear-gradient(#f0f6ff 0,#f0f6ff 1px,#dce8fb 1px,#d8e5fa 7px,#c3d8f6 8px,#d3e2f9 22px)"></div>
<div class="a" style="left:232px;top:706px;width:1px;height:20px;background:#8fb0e2;box-shadow:1px 0 0 #eef4fc"></div>
<div class="a" style="left:829px;top:705px;width:66px;height:22px;border-left:1px solid #8fb0e2;border-radius:0 0 6px 0;background:linear-gradient(#e3eefc 0,#e3eefc 1px,#c6daf6 1px,#bdd3f3 7px,#a4c1ed 8px,#b2cbf0 22px);box-shadow:inset 1px 0 0 #e6f0fd"></div>
<div class="t" style="letter-spacing:0.249px;left:14px;top:709px;font-weight:bold;color:#000">Awaiting Lending Request Processing</div>
<div class="t b" style="letter-spacing:-0.198px;left:238px;top:709px">Search completed</div>
<div class="t b" style="letter-spacing:-0.237px;left:834px;top:709px">Lending</div>
<svg class="a" style="left:879px;top:711px" width="12" height="12" viewBox="0 0 12 12"><g fill="#6f8fc8"><rect x="8" y="0" width="2" height="2"/><rect x="4" y="4" width="2" height="2"/><rect x="8" y="4" width="2" height="2"/><rect x="0" y="8" width="2" height="2"/><rect x="4" y="8" width="2" height="2"/><rect x="8" y="8" width="2" height="2"/></g><g fill="#fff"><rect x="9" y="1" width="2" height="2"/><rect x="5" y="5" width="2" height="2"/><rect x="9" y="5" width="2" height="2"/><rect x="1" y="9" width="2" height="2"/><rect x="5" y="9" width="2" height="2"/><rect x="9" y="9" width="2" height="2"/></g></svg>
<!-- annotation rectangles -->
<div class="red" style="left:410px;top:3px;width:162px;height:29px"></div>
<div class="red" style="left:72px;top:56px;width:53px;height:93px"></div>
<div class="red" style="left:24px;top:242px;width:855px;height:30px"></div>
<div class="red" style="left:441px;top:607px;width:438px;height:34px"></div>
</body>
</html>
